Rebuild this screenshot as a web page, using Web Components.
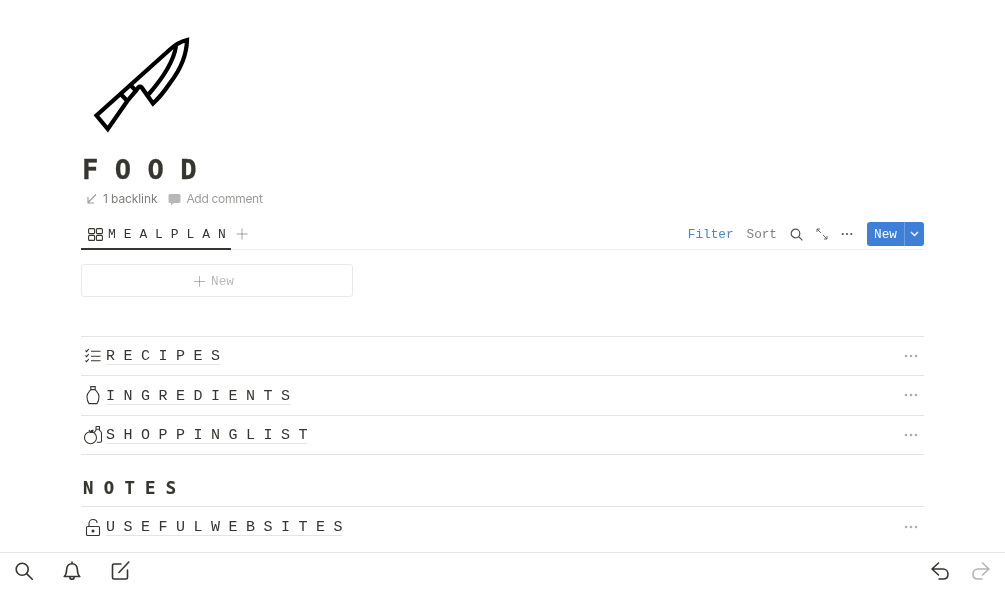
<!DOCTYPE html>
<html lang="en">
<head>
<meta charset="utf-8">
<title>FOOD</title>
<style>
  html, body { margin: 0; height: 100%; background: #fff; overflow: hidden; }
  body { font-family: "Liberation Mono", monospace; color: #37352f; }
</style>
</head>
<body>
<food-app>
  <food-header title="F O O D"></food-header>
  <food-tabs label="M E A L P L A N"></food-tabs>
  <food-card></food-card>
  <food-list class="first">
    <food-row label="R E C I P E S">
      <svg slot="icon" width="18" height="18" viewBox="0 0 18 18" fill="none" stroke="#37352f" stroke-width="1.1">
        <path d="M1.500 3.500l1.100 1.100 2.200-2.600M1.500 8.500l1.100 1.100 2.200-2.600M1.500 13.500l1.100 1.100 2.200-2.600"/>
        <path d="M7 4.200h9.500M7 9.200h9.500M7 13.800h9.500"/>
      </svg>
    </food-row>
    <food-row label="I N G R E D I E N T S">
      <svg slot="icon" width="18" height="20" viewBox="0 0 18 20" fill="none" stroke="#37352f" stroke-width="1.1">
        <path d="M6.800 1.600h4.400v3H6.800zM6.800 4.600C6.300 6.100 3 7.600 3 11.600c0 3 .8 5.500 2 7h8c1.200-1.500 2-4 2-7 0-4-3.300-5.500-3.800-7"/>
      </svg>
    </food-row>
    <food-row label="S H O P P I N G L I S T">
      <svg slot="icon" width="20" height="20" viewBox="0 0 20 20" fill="none" stroke="#37352f" stroke-width="1.1">
        <circle cx="7.500" cy="12.700" r="6"/>
        <path d="M7.500 7.500c0-1.500 1-2.300 2.500-2.300 0 1.500-1 2.300-2.500 2.300z" fill="#37352f"/>
        <path d="M7.500 7.500L6 5"/>
        <path d="M13 1.500h3.500V5c0 1 2 1.500 2 3v8c0 .8-.5 1.200-1.200 1.200h-3.500M13 1.500V5c0 1-1.500 1.500-2 2.800M13 4.200h3.500"/>
      </svg>
    </food-row>
  </food-list>
  <food-section>N O T E S</food-section>
  <food-list>
    <food-row class="bare" label="U S E F U L W E B S I T E S">
      <svg slot="icon" width="18" height="20" viewBox="0 0 18 20" fill="none" stroke="#37352f" stroke-width="1.1">
        <rect x="2.500" y="9.500" width="13" height="9" rx="1"/>
        <path d="M5 9.500V6.500C5 4 6.800 2.500 9 2.500s4 1.500 4 3.500"/>
        <circle cx="9" cy="14" r="1" fill="#37352f"/>
      </svg>
    </food-row>
  </food-list>
  <food-bar slot="bar"></food-bar>
</food-app>

<script>
const dots = `<svg width="14" height="4" viewBox="0 0 14 4" fill="currentColor"><circle cx="2" cy="2" r="1.300"/><circle cx="7" cy="2" r="1.300"/><circle cx="12" cy="2" r="1.300"/></svg>`;

class FoodApp extends HTMLElement {
  constructor() {
    super();
    this.attachShadow({mode: 'open'}).innerHTML = `
      <style>
        :host { display: flex; flex-direction: column; width: 1005px; height: 592px; will-change: transform; }
        main { flex: 1; min-height: 0; padding: 0 81px; box-sizing: border-box; overflow: hidden; }
        footer { flex: none; }
      </style>
      <main><slot></slot></main>
      <footer><slot name="bar"></slot></footer>`;
  }
}

class FoodHeader extends HTMLElement {
  constructor() {
    super();
    this.attachShadow({mode: 'open'}).innerHTML = `
      <style>
        :host { display: block; }
        svg.knife { display: block; margin: 36px 0 0 10px; }
        h1 { margin: 19px 0 0 1px; font: bold 27.200px/30px "DejaVu Sans Mono", monospace; -webkit-text-stroke: .3px #37352f; color: #37352f; white-space: pre; height: 30px; }
        .meta { display: flex; align-items: center; height: 20px; margin-top: 4px; padding-left: 5px;
                font: 12px/20px Inter, "Liberation Sans", sans-serif; letter-spacing: -.3px; color: rgba(55,53,47,.5); }
        .meta span.b { margin-left: 5px; letter-spacing: -.1px; color: rgba(55,53,47,.65); }
        .meta span.c { margin-left: 5px; }
        .meta svg.cm { margin-left: 11px; }
      </style>
      <svg class="knife" width="100" height="100" viewBox="91 36 100 100" fill="none" stroke="#000" stroke-width="4.200" stroke-miterlimit="10">
        <path d="M187 40C181 41.500 175.500 44.500 170.500 49L96.500 115.500 107.800 129 127.300 101 136 90.700l2.500-3.500c.8-.8 2.200-.8 3 0L153 103.500C161 96 166 89 170 83 177 74 186.500 60 187 40z"/>
        <path d="M176 46C174 60 163 78 148 95"/>
        <path d="M120 93.300l7.300 7.700M129.300 84l6.700 6.700"/>
      </svg>
      <h1></h1>
      <div class="meta">
        <svg width="12" height="12" viewBox="0 0 12 12" fill="none" stroke="currentColor" stroke-width="1.100"><path d="M10 1.500L2 9.500M2 4v6h6"/></svg>
        <span class="b">1 backlink</span>
        <svg class="cm" width="13" height="13" viewBox="0 0 13 13" fill="rgba(55,53,47,.35)"><path d="M2 1h9a1.500 1.500 0 0 1 1.500 1.500v6A1.500 1.500 0 0 1 11 10H6l-3 2.500V10H2A1.500 1.500 0 0 1 .5 8.500v-6A1.500 1.500 0 0 1 2 1z"/></svg>
        <span class="c">Add comment</span>
      </div>`;
    this.shadowRoot.querySelector('h1').textContent = this.getAttribute('title');
  }
}

class FoodTabs extends HTMLElement {
  constructor() {
    super();
    this.attachShadow({mode: 'open'}).innerHTML = `
      <style>
        :host { display: flex; align-items: stretch; height: 30px; margin-top: 11px; box-sizing: border-box;
                border-bottom: 1px solid #ededec; font-family: "Liberation Mono", monospace; }
        .tab { display: flex; align-items: center; gap: 5px; width: 150px; box-sizing: border-box; padding: 0 0 0 7px;
               height: 30px; border-bottom: 2px solid #37352f; font-size: 13px; letter-spacing: .05px; color: #37352f; white-space: pre; }
        .plus { display: flex; align-items: center; margin-left: 5px; color: rgba(55,53,47,.45); height: 28px; }
        .tools { margin-left: auto; display: flex; align-items: center; height: 28px; font-size: 12.700px; color: rgba(55,53,47,.65); }
        .filter { color: #4b85c4; }
        .sort { margin-left: 13px; }
        .tools svg { display: block; flex: none; }
        .new { display: flex; height: 24px; margin-left: 14px; background: #3e7fd8; color: #fff; border-radius: 3px; line-height: 25px; }
        .new span { width: 37px; text-align: center; }
        .new i { display: flex; align-items: center; justify-content: center; width: 19px; border-left: 1px solid rgba(255,255,255,.25); }
      </style>
      <div class="tab">
        <svg width="15" height="13" viewBox="0 0 15 13" fill="none" stroke="#37352f" stroke-width="1.100"><rect x=".6" y=".6" width="6" height="5" rx="1"/><rect x="8.400" y=".6" width="6" height="5" rx="1"/><rect x=".6" y="7.400" width="6" height="5" rx="1"/><rect x="8.400" y="7.400" width="6" height="5" rx="1"/></svg>
        <span id="label"></span>
      </div>
      <div class="plus"><svg width="12" height="12" viewBox="0 0 12 12" stroke="currentColor" stroke-width="1"><path d="M6 .5v11M.5 6h11"/></svg></div>
      <div class="tools">
        <span class="filter">Filter</span>
        <span class="sort">Sort</span>
        <svg style="margin-left:13px" width="13" height="13" viewBox="0 0 13 13" fill="none" stroke="#55534e" stroke-width="1.200"><circle cx="5.500" cy="5.500" r="4.300"/><path d="M8.700 8.700l3.700 3.700"/></svg>
        <svg style="margin-left:13px" width="12" height="12" viewBox="0 0 12 12" fill="none" stroke="#6b6964" stroke-width="1"><path d="M1 1l4 4M1 4V1h3M11 11L7 7M11 8v3H8"/></svg>
        <span style="margin-left:13px;color:#55534e;display:flex">${dots.replace('width="14"','width="12"')}</span>
        <div class="new">
          <span>New</span>
          <i><svg width="9" height="6" viewBox="0 0 9 6" fill="none" stroke="#fff" stroke-width="1.400"><path d="M1 1l3.500 3.500L8 1"/></svg></i>
        </div>
      </div>`;
    this.shadowRoot.querySelector('#label').textContent = this.getAttribute('label');
  }
}

class FoodCard extends HTMLElement {
  constructor() {
    super();
    this.attachShadow({mode: 'open'}).innerHTML = `
      <style>
        :host { display: flex; align-items: center; justify-content: center; gap: 6px; width: 272px; height: 33px; margin-top: 14px;
                padding: 1px 6px 0 0; box-sizing: border-box; border: 1px solid #e9e9e8; border-radius: 3px; color: rgba(55,53,47,.35);
                font: 12.700px "Liberation Mono", monospace; }
      </style>
      <svg width="11" height="11" viewBox="0 0 11 11" stroke="currentColor" stroke-width="1"><path d="M5.500 0v11M0 5.500h11"/></svg>
      <span>New</span>`;
  }
}

class FoodList extends HTMLElement {
  constructor() {
    super();
    this.attachShadow({mode: 'open'}).innerHTML = `
      <style>
        :host { display: block; border-top: 1px solid #e4e4e3; }
        :host(.first) { margin-top: 38.500px; }
      </style>
      <slot></slot>`;
  }
}

class FoodRow extends HTMLElement {
  constructor() {
    super();
    this.attachShadow({mode: 'open'}).innerHTML = `
      <style>
        :host { display: flex; align-items: center; height: 39.500px; box-sizing: border-box; border-bottom: 1px solid #e4e4e3; }
        :host(.bare) { border-bottom: 0; }
        .icon { flex: none; width: 23px; display: flex; justify-content: center; }
        .label { margin-left: 2px; font-size: 15px; letter-spacing: -.25px; line-height: 15px; padding-top: 3px; color: #37352f; white-space: pre;
                 border-bottom: 1px solid #e4e4e3; }
        .more { margin-left: auto; margin-right: 6px; display: flex; color: rgba(55,53,47,.4); }
      </style>
      <div class="icon"><slot name="icon"></slot></div>
      <span class="label"></span>
      <div class="more">${dots}</div>`;
    this.shadowRoot.querySelector('.label').textContent = this.getAttribute('label');
  }
}

class FoodSection extends HTMLElement {
  constructor() {
    super();
    this.attachShadow({mode: 'open'}).innerHTML = `
      <style>
        :host { display: block; height: 51px; box-sizing: border-box; padding: 23px 0 0 2px; }
        div { font: bold 17.200px/20px "DejaVu Sans Mono", monospace; -webkit-text-stroke: .2px #37352f; color: #37352f; white-space: pre; }
      </style>
      <div><slot></slot></div>`;
  }
}

class FoodBar extends HTMLElement {
  constructor() {
    super();
    this.attachShadow({mode: 'open'}).innerHTML = `
      <style>
        :host { display: flex; align-items: center; height: 40px; box-sizing: border-box; border-top: 1px solid #e4e4e3; padding: 0 15px 3px; }
        svg { display: block; fill: none; stroke: #37352f; stroke-width: 1.600; stroke-linecap: round; stroke-linejoin: round; }
        .spacer { flex: 1; }
        .off { stroke: #b4b4b2; }
      </style>
      <svg width="18" height="18" viewBox="0 0 18 18"><circle cx="7.200" cy="7.200" r="6"/><path d="M11.600 11.600l5.600 5.600"/></svg>
      <svg style="margin-left:30px" width="18" height="20" viewBox="0 0 18 20"><path d="M1.200 15.500c1.800-1.500 2.300-3 2.400-6.500C3.800 5 6 2.800 9 2.800s5.200 2.200 5.400 6.200c.1 3.500.6 5 2.400 6.500zM9 1v1.800M6.800 15.700c0 1.500 1 2.600 2.200 2.600s2.200-1.100 2.200-2.600"/></svg>
      <svg style="margin:0 0 2px 30px" width="19" height="19" viewBox="0 0 19 19"><path d="M10 3H3a1.500 1.500 0 0 0-1.500 1.500v12A1.500 1.500 0 0 0 3 18h12a1.500 1.500 0 0 0 1.500-1.500V9M8 11.500L17.800 1"/></svg>
      <div class="spacer"></div>
      <svg width="18" height="18" viewBox="0 0 18 18"><path d="M7.500 1L1 7l6.500 6M1 7h11c3 0 5 2.300 5 5.200s-2 4.800-5 4.800H8"/></svg>
      <svg class="off" style="margin-left:23px" width="18" height="18" viewBox="0 0 18 18"><path d="M10.500 1L17 7l-6.500 6M17 7H6c-3 0-5 2.300-5 5.200S3 17 6 17h4"/></svg>`;
  }
}

customElements.define('food-app', FoodApp);
customElements.define('food-header', FoodHeader);
customElements.define('food-tabs', FoodTabs);
customElements.define('food-card', FoodCard);
customElements.define('food-list', FoodList);
customElements.define('food-row', FoodRow);
customElements.define('food-section', FoodSection);
customElements.define('food-bar', FoodBar);
</script>
</body>
</html>
